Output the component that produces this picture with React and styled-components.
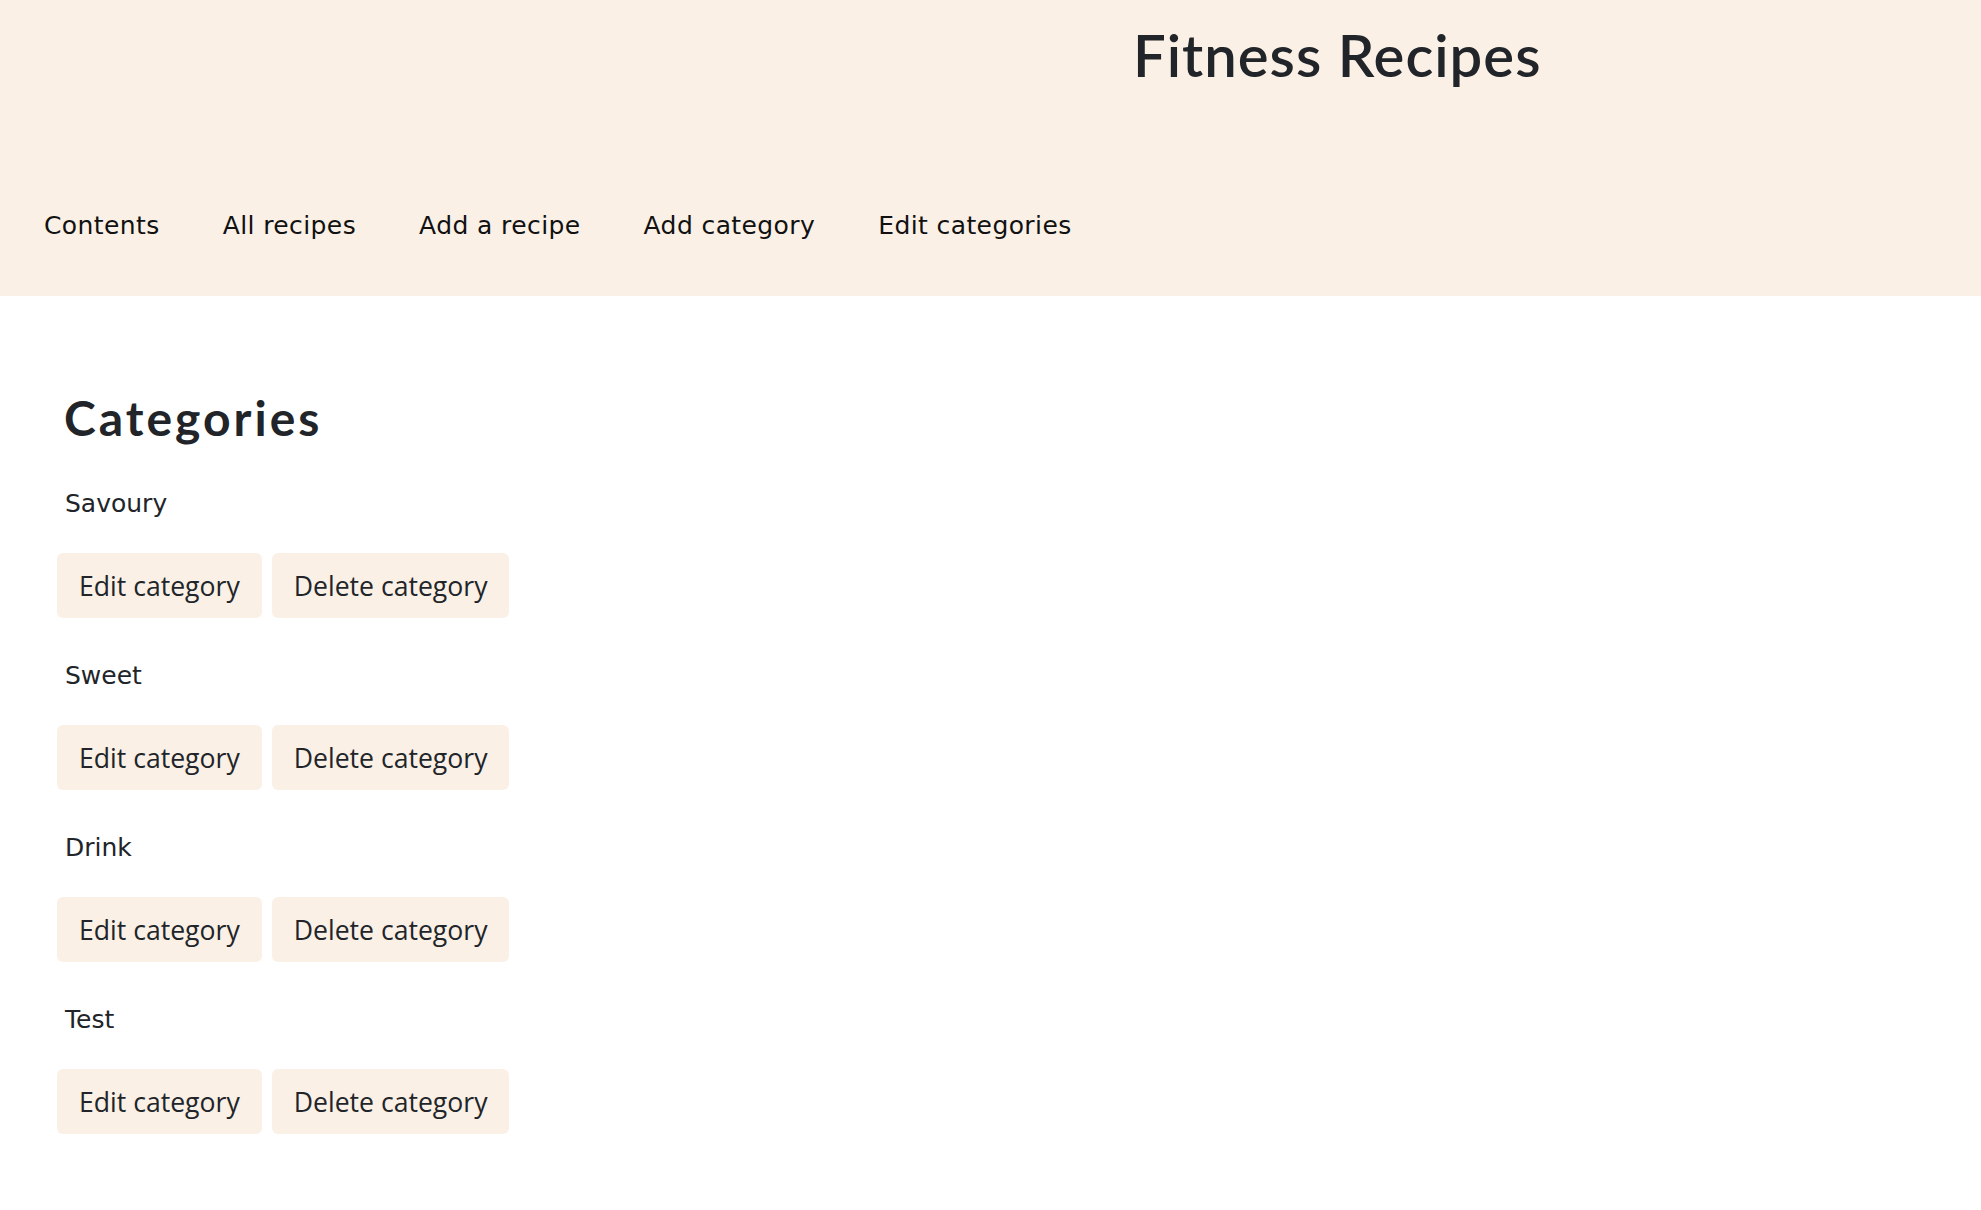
import React from "react";
import styled, { createGlobalStyle } from "styled-components";

const GlobalStyle = createGlobalStyle`
  html, body { margin: 0; padding: 0; background: #ffffff; }
  body { color: #212529; font-family: "Open Sans", "Liberation Sans", sans-serif; }
  * { box-sizing: border-box; }
`;

const Header = styled.header`
  background: #faf0e6;
  height: 296px;
  padding-top: 20px;
  display: flex;
  flex-direction: column;
`;

const TitleRow = styled.div`
  display: flex;
  padding-left: 1133px;
`;

const Title = styled.h1`
  margin: 0;
  font-family: "Lato", "Open Sans", sans-serif;
  font-weight: 600;
  font-size: 58px;
  line-height: 70px;
  letter-spacing: 1px;
  color: #212529;
`;

const Nav = styled.nav`
  display: flex;
  gap: 63px;
  margin-top: 121px;
  padding-left: 44px;
`;

const NavLink = styled.a`
  font-family: "DejaVu Sans", sans-serif;
  font-size: 25px;
  line-height: 30px;
  letter-spacing: 0.4px;
  color: #111111;
  text-decoration: none;
  cursor: pointer;
`;

const Main = styled.main`
  padding: 93px 57px 40px;
`;

const Heading = styled.h2`
  margin: 0 0 42px 7px;
  font-family: "Lato", "Open Sans", sans-serif;
  font-weight: 700;
  font-size: 48px;
  line-height: 58px;
  letter-spacing: 3px;
  color: #212529;
`;

const CategoryList = styled.div`
  display: flex;
  flex-direction: column;
  gap: 43px;
`;

const CategoryItem = styled.section`
  display: flex;
  flex-direction: column;
  gap: 34px;
`;

const Label = styled.p`
  margin: 0 0 0 8px;
  font-family: "DejaVu Sans", sans-serif;
  font-size: 25px;
  line-height: 30px;
  color: #212529;
`;

const ButtonRow = styled.div`
  display: flex;
  gap: 10px;
`;

const Button = styled.button`
  display: inline-flex;
  align-items: center;
  height: 65px;
  padding: 0 22px;
  border: none;
  border-radius: 6px;
  background: #faf0e6;
  font-family: "Open Sans", "Noto Sans", sans-serif;
  font-size: 26.6px;
  color: #212529;
  cursor: pointer;
`;

const categories = ["Savoury", "Sweet", "Drink", "Test"];
const navItems = ["Contents", "All recipes", "Add a recipe", "Add category", "Edit categories"];

export default function App() {
  return (
    <>
      <GlobalStyle />
      <Header>
        <TitleRow>
          <Title>Fitness Recipes</Title>
        </TitleRow>
        <Nav>
          {navItems.map((n) => (
            <NavLink key={n}>{n}</NavLink>
          ))}
        </Nav>
      </Header>
      <Main>
        <Heading>Categories</Heading>
        <CategoryList>
          {categories.map((c) => (
            <CategoryItem key={c}>
              <Label>{c}</Label>
              <ButtonRow>
                <Button>Edit category</Button>
                <Button>Delete category</Button>
              </ButtonRow>
            </CategoryItem>
          ))}
        </CategoryList>
      </Main>
    </>
  );
}
